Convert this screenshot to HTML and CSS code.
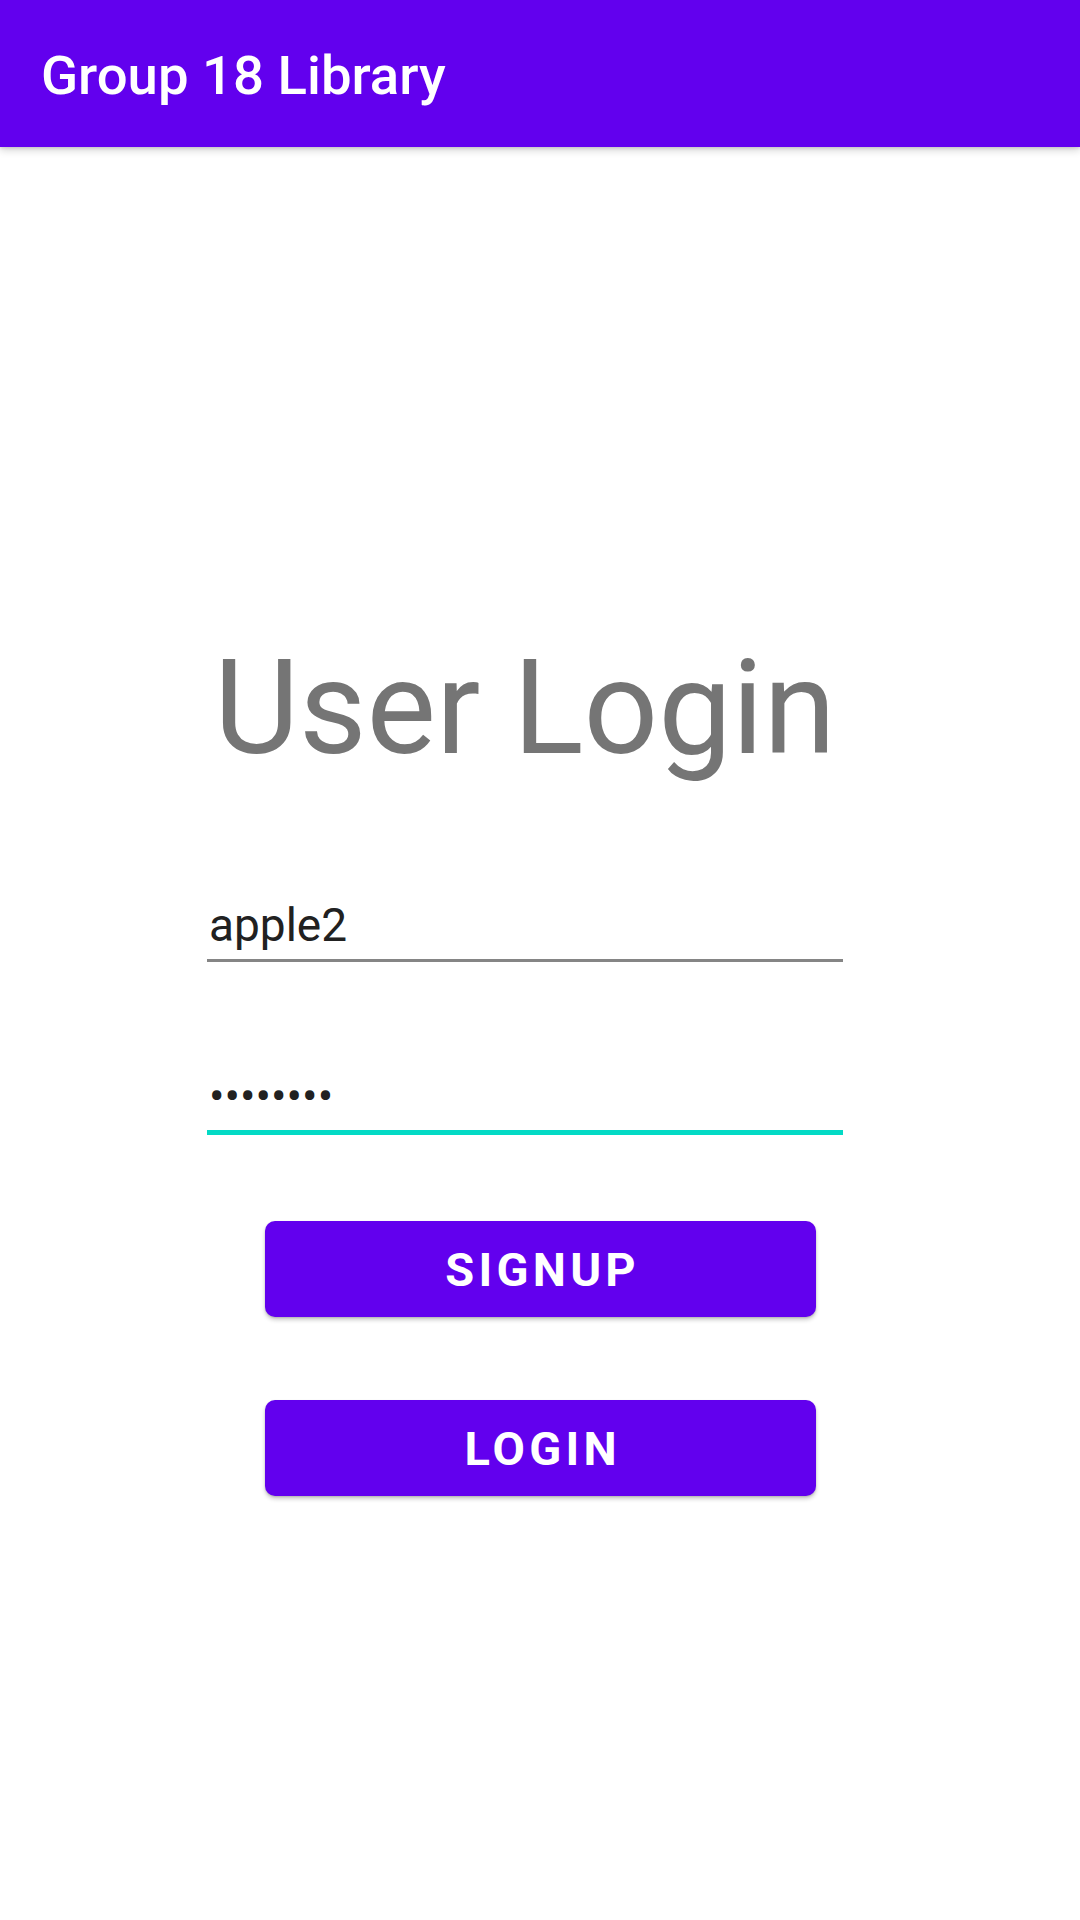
FILE: index.html
```html
<!DOCTYPE html>
<html lang="en">
<head>
<meta charset="utf-8">
<title>Group 18 Library</title>
<link rel="stylesheet" href="styles.css">
</head>
<body>
<header class="app-bar">
  <h1 class="app-title">Group 18 Library</h1>
</header>
<main class="content">
  <section class="form">
    <h2 class="heading">User Login</h2>
    <div class="field">
      <span class="field-text">apple2</span>
    </div>
    <div class="field field-focused">
      <span class="field-text field-password">••••••••</span>
    </div>
  </section>
  <section class="actions">
    <button class="btn" type="button">Signup</button>
    <button class="btn" type="button">Login</button>
  </section>
</main>
</body>
</html>
```

FILE: styles.css
```css
* { box-sizing: border-box; }
html, body {
  margin: 0;
  padding: 0;
  background: #ffffff;
  width: 1080px;
  height: 1920px;
  overflow: hidden;
  font-family: Roboto, "Noto Sans", sans-serif;
}
.app-bar {
  height: 147px;
  background: #6200ee;
  display: flex;
  align-items: center;
  padding: 4px 0 0 41px;
  box-shadow: 0 3px 8px rgba(0, 0, 0, 0.18), 0 1px 3px rgba(0, 0, 0, 0.12);
  position: relative;
  z-index: 1;
}
.app-title {
  margin: 0;
  font-size: 54.5px;
  line-height: 55px;
  font-weight: 500;
  color: #ffffff;
}
.content {
  padding-top: 496px;
}
.form {
  width: 636px;
  margin-left: 207px;
}
.heading {
  margin: 0;
  font-size: 131px;
  line-height: 131px;
  font-weight: 400;
  color: #757575;
  text-align: center;
}
.field {
  margin-top: 123px;
  padding: 0 0 6px 2px;
  border-bottom: 3px solid #858585;
}
.field-focused {
  margin-top: 106px;
  border-bottom: 5px solid #03dac5;
}
.field-text {
  display: block;
  font-size: 46px;
  line-height: 56px;
  color: #212121;
}
.actions {
  margin-top: 86px;
  display: flex;
  flex-direction: column;
  align-items: center;
  gap: 83px;
}
.btn {
  width: 551px;
  height: 96px;
  border: none;
  border-radius: 10px;
  background: #6200ee;
  color: #ffffff;
  font-family: Roboto, "Noto Sans", sans-serif;
  font-size: 47px;
  font-weight: 700;
  letter-spacing: 0.09em;
  padding: 0 0 0 0.09em;
  text-transform: uppercase;
  box-shadow: 0 3px 4px rgba(0, 0, 0, 0.2), 0 1px 2px rgba(0, 0, 0, 0.14);
  margin-left: 1px;
}
```
